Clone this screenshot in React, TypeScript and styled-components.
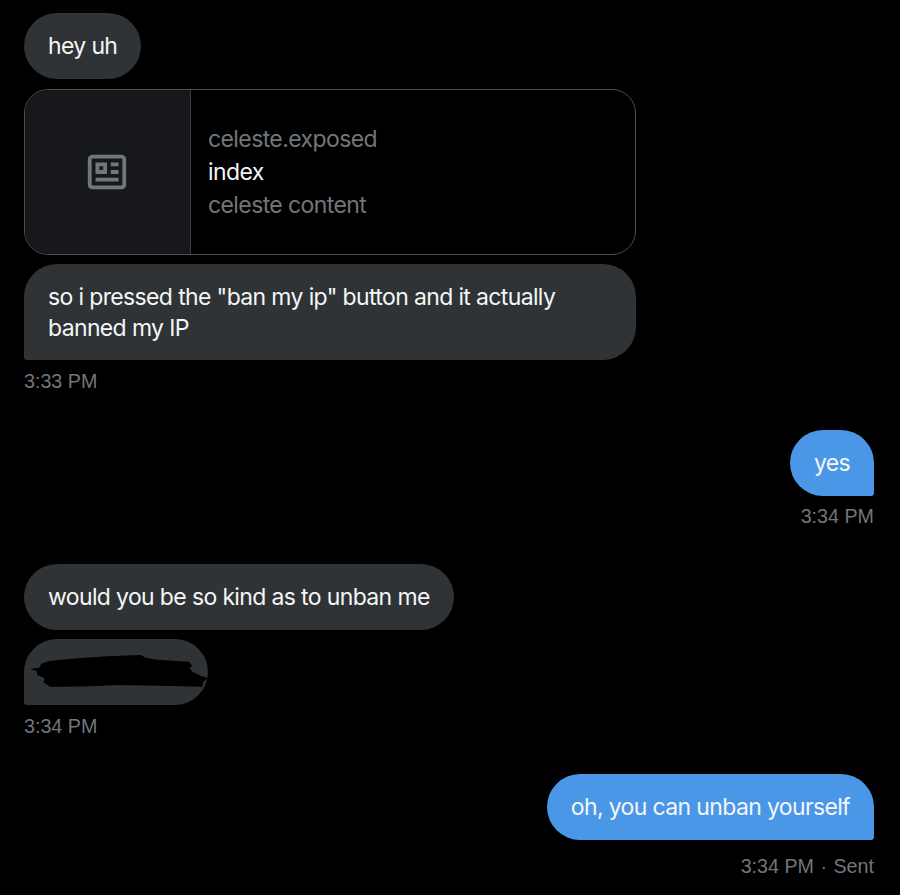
import * as React from 'react'
import styled, { createGlobalStyle } from 'styled-components'

const GlobalStyle = createGlobalStyle`
  html, body {
    margin: 0;
    padding: 0;
    background: #000;
  }
`

const Page = styled.div`
  box-sizing: border-box;
  width: 900px;
  height: 895px;
  padding: 13px 26px 0 24px;
  background: #000;
  font-family: Inter, 'Liberation Sans', sans-serif;
  display: flex;
  flex-direction: column;
  overflow: hidden;
`

const Group = styled.div<{ $mine?: boolean; $gap?: number }>`
  display: flex;
  flex-direction: column;
  align-items: ${(p) => (p.$mine ? 'flex-end' : 'flex-start')};
  margin-bottom: ${(p) => p.$gap ?? 0}px;
`

const Bubble = styled.div<{ $mine?: boolean; $tail?: boolean; $width?: number; $after?: number }>`
  box-sizing: border-box;
  position: relative;
  overflow: hidden;
  width: ${(p) => (p.$width ? `${p.$width}px` : 'auto')};
  min-height: 66px;
  padding: 18px 24px 16px;
  margin-bottom: ${(p) => p.$after ?? 9}px;
  background: ${(p) => (p.$mine ? '#4a97e8' : '#2f3336')};
  color: #f4f6f7;
  font-size: 23px;
  letter-spacing: -0.64px;
  line-height: 31px;
  border-radius: ${(p) =>
    p.$tail ? (p.$mine ? '33px 33px 3px 33px' : '33px 33px 33px 3px') : '33px'};
`

const Time = styled.div<{ $drop?: number }>`
  color: #71767b;
  font-family: 'Liberation Sans', Arial, sans-serif;
  font-size: 19.7px;
  line-height: 22px;
  margin-top: ${(p) => p.$drop ?? 1}px;
`

const Dot = styled.span`
  margin: 0 1px;
`

const Card = styled.div`
  box-sizing: border-box;
  width: 612px;
  height: 166px;
  margin-bottom: 9px;
  display: flex;
  border: 1px solid #4a4e52;
  border-radius: 24px;
  overflow: hidden;
`

const CardMedia = styled.div`
  box-sizing: border-box;
  width: 166px;
  flex: none;
  padding-right: 2px;
  display: flex;
  align-items: center;
  justify-content: center;
  background: #16181c;
  border-right: 1px solid #3b3f43;
  color: #71767b;
`

const CardBody = styled.div`
  flex: 1;
  padding-left: 17px;
  padding-top: 1px;
  display: flex;
  flex-direction: column;
  justify-content: center;
  font-size: 23px;
  letter-spacing: -0.6px;
  line-height: 33px;
`

const CardLine = styled.div<{ $strong?: boolean }>`
  color: ${(p) => (p.$strong ? '#f4f6f7' : '#71767b')};
`

const Scribble = styled.svg`
  position: absolute;
  left: 0;
  top: 0;
  display: block;
`

const ArticleIcon = () => (
  <svg width="46" height="46" viewBox="0 0 24 24" fill="currentColor">
    <path d="M1.998 5.5c0-1.381 1.119-2.5 2.5-2.5h15c1.381 0 2.5 1.119 2.5 2.5v13c0 1.381-1.119 2.5-2.5 2.5h-15c-1.381 0-2.5-1.119-2.5-2.5v-13zm2.5-.5c-.276 0-.5.224-.5.5v13c0 .276.224.5.5.5h15c.276 0 .5-.224.5-.5v-13c0-.276-.224-.5-.5-.5h-15zM6 7h6v6H6V7zm2 2v2h2V9H8zm10 0h-4V7h4v2zm0 4h-4v-2h4v2zm-.002 4h-12v-2h12v2z" />
  </svg>
)

export default function App() {
  return (
    <Page>
      <GlobalStyle />
      <Group $gap={38}>
        <Bubble $after={10}>hey uh</Bubble>
        <Card>
          <CardMedia>
            <ArticleIcon />
          </CardMedia>
          <CardBody>
            <CardLine>celeste.exposed</CardLine>
            <CardLine $strong>index</CardLine>
            <CardLine>celeste content</CardLine>
          </CardBody>
        </Card>
        <Bubble $tail $width={612}>
          so i pressed the "ban my ip" button and it actually banned my IP
        </Bubble>
        <Time>3:33 PM</Time>
      </Group>
      <Group $mine $gap={37}>
        <Bubble $mine $tail>yes</Bubble>
        <Time $drop={0}>3:34 PM</Time>
      </Group>
      <Group $gap={37}>
        <Bubble>would you be so kind as to unban me</Bubble>
        <Bubble $tail $width={184}>
          <Scribble width="184" height="66" viewBox="0 0 552 198">
            <path
              fill="#000"
              d="M18 90 L45 86 L52 74 L75 66 L110 62 L160 58 L250 52 L350 48 L365 56 L400 62 L495 68 L505 80 L497 88 L505 98 L530 110 L552 118 L538 128 L535 143 L410 140 L280 138 L200 142 L80 144 L58 130 L62 118 L40 108 L38 96 Z"
            />
          </Scribble>
        </Bubble>
        <Time>3:34 PM</Time>
      </Group>
      <Group $mine>
        <Bubble $mine $tail>oh, you can unban yourself</Bubble>
        <Time $drop={6}>
          3:34 PM <Dot>·</Dot> Sent
        </Time>
      </Group>
    </Page>
  )
}
